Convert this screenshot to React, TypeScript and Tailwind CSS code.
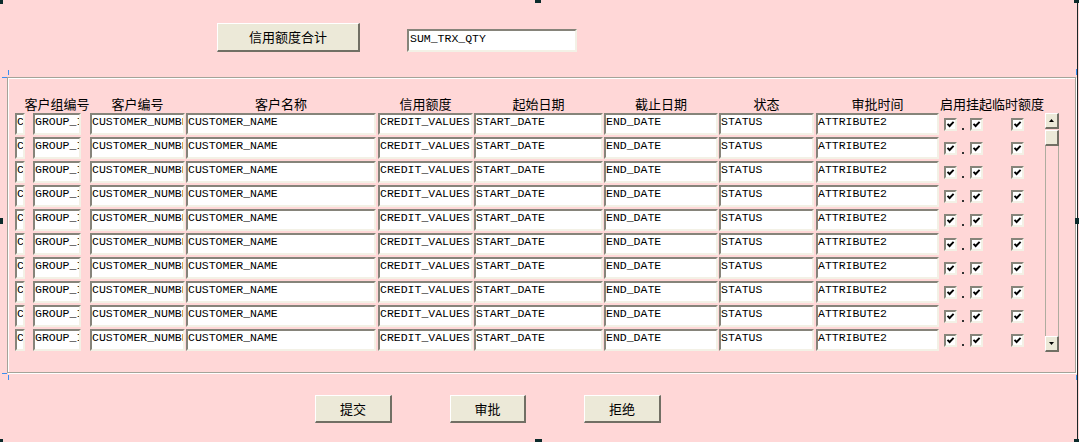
import React from "react";

const mono = "font-['Liberation_Mono','Courier_New',monospace]";
const cjk = "font-['Noto_Sans_CJK_SC','Noto_Sans',sans-serif]";

const sunken =
  "border-2 border-t-[#86847a] border-l-[#86847a] border-b-[#f3f1e6] border-r-[#f3f1e6] bg-white";
const raised =
  "border-t border-l border-b-2 border-r-2 border-t-white border-l-white border-b-[#716f64] border-r-[#716f64] bg-[#ece9d8]";

// column geometry, x positions match the form layout
const cols = [
  { cls: "w-[10px] ml-[7px]", text: "C", head: "" },
  { cls: "w-[48px] ml-[8px]", text: "GROUP_ID", head: "客户组编号" },
  { cls: "w-[95px] ml-[9px]", text: "CUSTOMER_NUMBER", head: "客户编号" },
  { cls: "w-[190px] ml-[1px]", text: "CUSTOMER_NAME", head: "客户名称" },
  { cls: "w-[95px] ml-[2px]", text: "CREDIT_VALUES", head: "信用额度" },
  { cls: "w-[129px] ml-[1px]", text: "START_DATE", head: "起始日期" },
  { cls: "w-[114px] ml-[1px]", text: "END_DATE", head: "截止日期" },
  { cls: "w-[95px] ml-[1px]", text: "STATUS", head: "状态" },
  { cls: "w-[123px] ml-[2px]", text: "ATTRIBUTE2", head: "审批时间" },
];

function Check({ cls }: { cls: string }) {
  return (
    <div className={`${sunken} ${cls} mt-[5px] h-[13px] w-[13px] shrink-0 border-b-[#e2dfd2] border-r-[#e2dfd2]`}>
      <svg viewBox="0 0 9 9" className="h-[9px] w-[9px]">
        <path d="M1.5 3.8 L3.6 6 L7.6 1.8" fill="none" stroke="#000" strokeWidth="1.9" />
      </svg>
    </div>
  );
}

function Button({ label, cls }: { label: string; cls: string }) {
  return (
    <div className={`${raised} ${cls} flex h-[28px] shrink-0 items-center justify-center ${cjk} text-[13px] text-black`}>
      {label}
    </div>
  );
}

function Arrow({ up }: { up?: boolean }) {
  return (
    <svg viewBox="0 0 5 3" className="h-[3px] w-[5px]">
      <path d={up ? "M2.5 0 L5 3 L0 3 Z" : "M0 0 L5 0 L2.5 3 Z"} fill="#000" />
    </svg>
  );
}

function Row() {
  return (
    <div className="flex h-[22px]">
      {cols.map((c, i) => (
        <div
          key={i}
          className={`${sunken} ${c.cls} h-[22px] shrink-0 overflow-hidden whitespace-nowrap ${mono} text-[11.5px] leading-[14px] text-black`}
        >
          {c.text}
        </div>
      ))}
      <Check cls="ml-[5px]" />
      <div className="ml-[5px] mt-[15px] h-[2px] w-[2px] bg-[#333]" />
      <Check cls="ml-[6px]" />
      <Check cls="ml-[28px]" />
    </div>
  );
}

export default function App() {
  return (
    <div className="relative h-[442px] w-[1079px] overflow-hidden bg-[#ffd7d7]">
      {/* top: total button + sum field */}
      <div className="flex pl-[217px] pt-[23px]">
        <Button label="信用额度合计" cls="w-[143px] h-[29px]" />
        <div className={`${sunken} ml-[47px] mt-[6px] h-[23px] w-[170px] ${mono} pl-[1px] pt-[1px] text-[11.5px] leading-[14px] text-black`}>
          SUM_TRX_QTY
        </div>
      </div>

      {/* multi-row block frame */}
      <div className="ml-[7px] mt-[25px] h-[296px] w-[1069px] border border-[#a5a399] pt-[17px] shadow-[inset_1px_1px_0_#fff,1px_1px_0_#fff]">
        <div className={`flex h-[17px] mb-[1px] ${cjk} text-[13px] leading-[17px] text-black`}>
          {cols.map((c, i) => (
            <div key={i} className={`${c.cls} flex shrink-0 justify-center whitespace-nowrap`}>
              <span className="shrink-0">{c.head}</span>
            </div>
          ))}
          <div className="ml-[1px] whitespace-nowrap">启用挂起临时额度</div>
        </div>

        <div className="flex">
          <div className="flex flex-col gap-[2px]">
            {Array.from({ length: 10 }).map((_, i) => (
              <Row key={i} />
            ))}
          </div>
          {/* scrollbar */}
          <div className="ml-[21px] flex h-[239px] w-[14px] flex-col">
            <div className={`${raised} flex h-[16px] items-center justify-center`}>
              <Arrow up />
            </div>
            <div className={`${raised} mt-[1px] h-[16px]`} />
            <div className="flex-1 border-x border-[#aeac9f]" />
            <div className={`${raised} flex h-[16px] items-center justify-center`}>
              <Arrow />
            </div>
          </div>
        </div>
      </div>

      {/* action buttons */}
      <div className="flex gap-[58px] pl-[315px] pt-[22px]">
        <Button label="提交" cls="w-[77px]" />
        <Button label="审批" cls="w-[76px]" />
        <Button label="拒绝" cls="w-[77px]" />
      </div>

      {/* design-time selection handles and frame marks */}
      <div className="absolute right-[1px] top-0 h-full w-[1px] bg-[#1c2626]" />
      <div className="absolute left-0 top-0 h-[4px] w-[3px] bg-[#0b2b2b]" />
      <div className="absolute left-[535px] top-0 h-[3px] w-[6px] bg-[#0b2b2b]" />
      <div className="absolute right-0 top-0 h-[3px] w-[5px] bg-[#0b2b2b]" />
      <div className="absolute left-0 top-[218px] h-[6px] w-[3px] bg-[#0b2b2b]" />
      <div className="absolute right-0 top-[218px] h-[6px] w-[4px] bg-[#0b2b2b]" />
      <div className="absolute bottom-0 left-0 h-[3px] w-[3px] bg-[#0b2b2b]" />
      <div className="absolute bottom-0 left-[535px] h-[3px] w-[7px] bg-[#0b2b2b]" />
      <div className="absolute bottom-0 right-0 h-[3px] w-[5px] bg-[#0b2b2b]" />
      <div className="absolute left-[2px] top-[77px] h-[1px] w-[5px] bg-[#3b8ef0]" />
      <div className="absolute left-[8px] top-[70px] h-[5px] w-[1px] bg-[#3b8ef0]" />
      <div className="absolute left-[2px] top-[373px] h-[1px] w-[5px] bg-[#3b8ef0]" />
      <div className="absolute left-[8px] top-[375px] h-[5px] w-[1px] bg-[#3b8ef0]" />
      <div className="absolute right-[2px] top-[69px] h-[6px] w-[1px] bg-[#3b8ef0]" />
      <div className="absolute right-[2px] top-[375px] h-[5px] w-[1px] bg-[#3b8ef0]" />
    </div>
  );
}
